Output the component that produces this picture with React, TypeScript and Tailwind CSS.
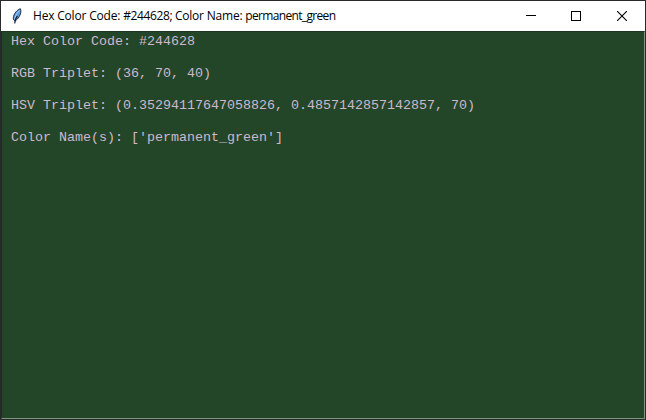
const lines = [
  'Hex Color Code: #244628',
  'RGB Triplet: (36, 70, 40)',
  'HSV Triplet: (0.35294117647058826, 0.4857142857142857, 70)',
  "Color Name(s): ['permanent_green']",
];

function Feather() {
  return (
    <svg className="ml-[8px] h-4 w-4 shrink-0" viewBox="0 0 16 16" aria-hidden="true">
      <path d="M11.300 .7C12.500 2.500 11.800 6 10.300 8.500 9.200 10.500 7.700 12 6 12.700L4.500 11.700C3.500 8 6.500 2.500 11.300 .7Z" fill="#5c9be0" stroke="#17212d" strokeWidth="0.9" />
      <path d="M10.500 2.500C8 5 6.200 8 5.600 11.500" fill="none" stroke="#a9d0f7" strokeWidth="1" />
      <path d="M8.500 8C7 9.500 6 11.500 5.700 15.500" fill="none" stroke="#17212d" strokeWidth="1.1" />
    </svg>
  );
}

function WindowControls() {
  return (
    <div className="ml-auto flex h-full" aria-label="Window controls">
      <button className="flex w-[44px] items-center justify-center" aria-label="Minimize">
        <svg width="10" height="10" shapeRendering="crispEdges"><path d="M0 4.500H10" stroke="#000" /></svg>
      </button>
      <button className="flex w-[46px] items-center justify-center" aria-label="Maximize">
        <svg width="10" height="10" shapeRendering="crispEdges"><path d="M.5.5H9.500V9.500H.5Z" fill="none" stroke="#000" /></svg>
      </button>
      <button className="flex w-[46px] items-center justify-center pb-px" aria-label="Close">
        <svg width="10" height="10"><path d="M0 0 10 10M10 0 0 10" stroke="#000" strokeWidth="1.1" /></svg>
      </button>
    </div>
  );
}

export default function App() {
  return (
    <div className="flex h-[420px] w-[646px] flex-col overflow-hidden border border-[#2a2a2e] bg-[#244628]">
      <header className="flex h-[30px] shrink-0 items-center bg-white">
        <Feather />
        <h1 className="ml-[8px] whitespace-pre font-['Open_Sans',sans-serif] text-[12px] leading-4 text-black">
          <span className="tracking-[-0.19px]">{'Hex Color Code: '}</span>
          <span className="tracking-[-0.38px]">{'#244628; '}</span>
          <span className="tracking-[-0.21px]">{'Color Name: '}</span>
          <span className="tracking-[-0.66px]">permanent_green</span>
        </h1>
        <WindowControls />
      </header>
      <main className="flex-1 border border-t-[#1d3820] border-r-[#82967f] border-b-[#82967f] border-l-[#1d3020] pl-[9px] pt-[2px]">
        {lines.map((line) => (
          <p key={line} className="mb-4 h-4 whitespace-pre font-['Liberation_Mono',monospace] text-[13.333px] leading-4 text-[#cdb8d0]">
            {line}
          </p>
        ))}
      </main>
    </div>
  );
}
